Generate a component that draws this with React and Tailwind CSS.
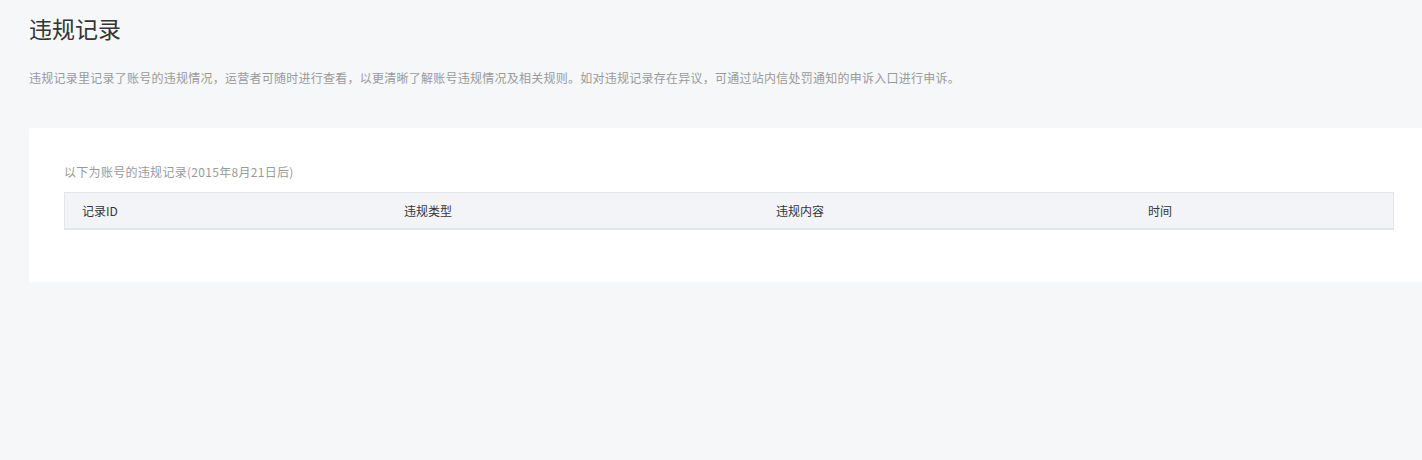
import React from 'react';

const font = { fontFamily: '"Noto Sans CJK SC", "Liberation Sans", sans-serif' };

const columns = [
    { label: '记录ID', width: 'w-[322px]' },
    { label: '违规类型', width: 'w-[372px]' },
    { label: '违规内容', width: 'w-[372px]' },
    { label: '时间', width: 'flex-1' },
];

const App = () => {
    return (
        <div className="min-h-[460px] bg-[#f6f7f9] pl-[29px] pt-[12px]" style={font}>
            <h1 className="text-[23px] leading-[32px] text-[#353535] font-normal">违规记录</h1>
            <p className="mt-[26px] text-[12px] leading-[16px] tracking-[0.25px] text-[#9a9a9a]">
                违规记录里记录了账号的违规情况，运营者可随时进行查看，以更清晰了解账号违规情况及相关规则。如对违规记录存在异议，可通过站内信处罚通知的申诉入口进行申诉。
            </p>

            <div className="mt-[42px] bg-white rounded-l-[2px] pl-[35px] pr-[28px] pt-[36px] pb-[52px]">
                <p className="text-[12px] leading-[16px] tracking-[0.3px] text-[#9a9a9a]">以下为账号的违规记录(2015年8月21日后)</p>
                <div className="mt-[12px] flex h-[38px] items-center bg-[#f3f4f7] border border-[#e4e5e9] border-b-2 pl-[17px]">
                    {columns.map((col) => (
                        <div key={col.label} className={`${col.width} text-[12px] text-[#353535]`}>
                            {col.label}
                        </div>
                    ))}
                </div>
            </div>
        </div>
    );
};

export default App;
